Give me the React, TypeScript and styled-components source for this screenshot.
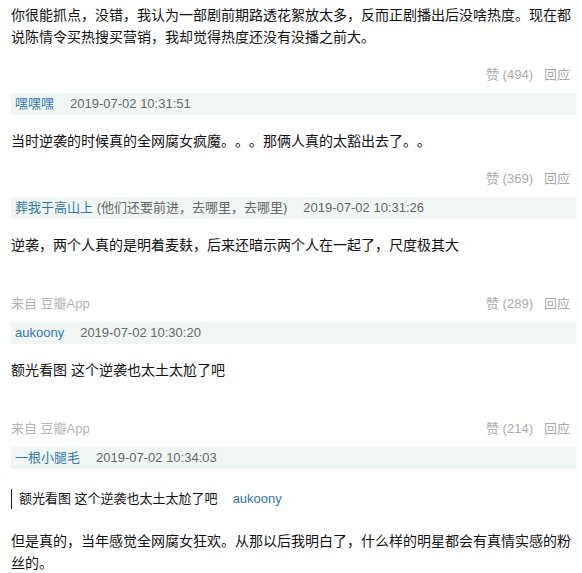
import React from "react";
import styled, { createGlobalStyle } from "styled-components";

const GlobalStyle = createGlobalStyle`
  html, body {
    margin: 0;
    padding: 0;
    background: #fff;
  }
  body {
    font-family: "Liberation Sans", Arial, "Noto Sans CJK SC", sans-serif;
    color: #111;
    text-spacing-trim: space-all;
  }
`;

const Page = styled.div`
  width: 582px;
  box-sizing: border-box;
  padding: 4px 6px 0 11px;
  display: flex;
  flex-direction: column;
`;

const Comment = styled.div`
  display: flex;
  flex-direction: column;
  & + & {
    margin-top: 7px;
  }
`;

const MetaBar = styled.div`
  height: 22px;
  line-height: 22px;
  background: #f0f6f3;
  padding-left: 4px;
  font-size: 13px;
  display: flex;
  align-items: center;
  gap: 16px;
  white-space: nowrap;
`;

const Author = styled.span`
  color: #37a;
`;

const Signature = styled.span`
  color: #666;
`;

const PubTime = styled.span`
  color: #666;
`;

const Quote = styled.div`
  margin-top: 20px;
  border-left: 1px solid #111;
  padding-left: 7px;
  height: 20px;
  line-height: 20px;
  font-size: 13px;
  display: flex;
  align-items: center;
  color: #111;
`;

const QuoteAuthor = styled.span`
  color: #37a;
  margin-left: 15px;
`;

const Text = styled.p<{ $gap: number }>`
  margin: ${(p) => p.$gap}px 0 0 0;
  font-size: 14px;
  line-height: 22px;
  color: #111;
`;

const Footer = styled.div<{ $source?: boolean }>`
  margin-top: ${(p) => (p.$source ? "37px" : "16px")};
  height: 22px;
  line-height: 22px;
  font-size: 13px;
  display: flex;
  align-items: center;
  justify-content: space-between;
  padding-right: 6px;
`;

const Source = styled.span`
  color: #b5b5b5;
`;

const Actions = styled.div`
  margin-left: auto;
  display: flex;
  gap: 11px;
  color: #aaa;
`;

type Item = {
  author?: string;
  signature?: string;
  time?: string;
  quote?: { text: string; author: string };
  text: string;
  likes?: number;
  source?: boolean;
};

const items: Item[] = [
  {
    text: "你很能抓点，没错，我认为一部剧前期路透花絮放太多，反而正剧播出后没啥热度。现在都说陈情令买热搜买营销，我却觉得热度还没有没播之前大。",
    likes: 494,
  },
  {
    author: "嘿嘿嘿",
    time: "2019-07-02 10:31:51",
    text: "当时逆袭的时候真的全网腐女疯魔。。。那俩人真的太豁出去了。。",
    likes: 369,
  },
  {
    author: "葬我于高山上",
    signature: "(他们还要前进，去哪里，去哪里)",
    time: "2019-07-02 10:31:26",
    text: "逆袭，两个人真的是明着麦麸，后来还暗示两个人在一起了，尺度极其大",
    likes: 289,
    source: true,
  },
  {
    author: "aukoony",
    time: "2019-07-02 10:30:20",
    text: "额光看图 这个逆袭也太土太尬了吧",
    likes: 214,
    source: true,
  },
  {
    author: "一根小腿毛",
    time: "2019-07-02 10:34:03",
    quote: { text: "额光看图 这个逆袭也太土太尬了吧", author: "aukoony" },
    text: "但是真的，当年感觉全网腐女狂欢。从那以后我明白了，什么样的明星都会有真情实感的粉丝的。",
  },
];

export default function App() {
  return (
    <>
      <GlobalStyle />
      <Page>
        {items.map((it, i) => (
          <Comment key={i}>
            {it.author && (
              <MetaBar>
                <span>
                  <Author>{it.author}</Author>
                  {it.signature && <Signature> {it.signature}</Signature>}
                </span>
                <PubTime>{it.time}</PubTime>
              </MetaBar>
            )}
            {it.quote && (
              <Quote>
                <span>{it.quote.text}</span>
                <QuoteAuthor>{it.quote.author}</QuoteAuthor>
              </Quote>
            )}
            <Text $gap={!it.author ? 0 : it.quote ? 21 : 15}>{it.text}</Text>
            {it.likes !== undefined && (
              <Footer $source={it.source}>
                {it.source && <Source>来自 豆瓣App</Source>}
                <Actions>
                  <span>赞 ({it.likes})</span>
                  <span>回应</span>
                </Actions>
              </Footer>
            )}
          </Comment>
        ))}
      </Page>
    </>
  );
}
